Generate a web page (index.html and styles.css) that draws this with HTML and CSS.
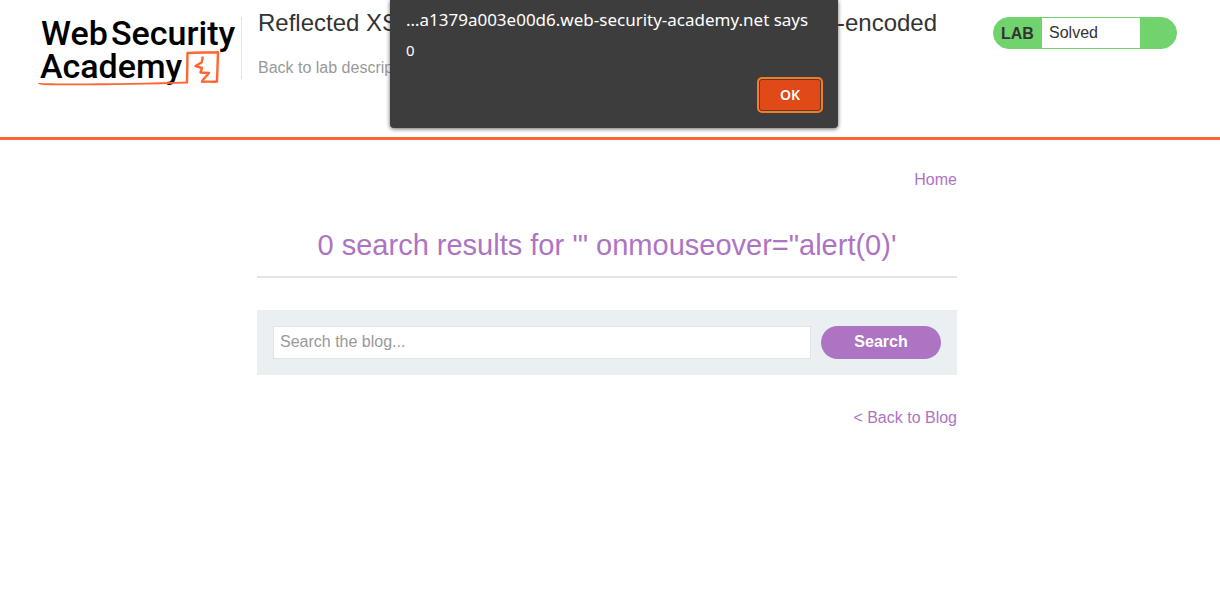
FILE: index.html
```html
<!DOCTYPE html>
<html lang="en">
<head>
<meta charset="utf-8">
<meta name="viewport" content="width=device-width, initial-scale=1">
<title>Reflected XSS into attribute with angle brackets HTML-encoded</title>
<link rel="stylesheet" href="styles.css">
</head>
<body>
<header class="lab-header">
  <div class="lab-header-inner">
    <a class="logo" href="#" aria-label="Web Security Academy">
      <svg class="logo-art" viewBox="0 0 204 76" role="img" aria-hidden="true">
        <text class="logo-text" y="35"><tspan x="3">Web</tspan><tspan x="73">Security</tspan></text>
        <text class="logo-text" x="2" y="68">Academy</text>
        <path class="logo-fill" d="M0 73C18 74 100 73.500 150 71.500L150 73.500C105 74.800 35 76 6 75C2 74.700 0 74 0 73Z"/>
        <path class="logo-line" d="M149 72.500L149.500 43C160 42.300 170 42.800 180 42.200L179 71.500C174 72 169 71.300 163 71.800"/>
        <path class="logo-line" d="M164.500 46.500C165 49 164 51 163.500 52.500L157.500 56L164 58L162.500 62.500L171 63L164 71"/>
      </svg>
    </a>
    <div class="title-container">
      <h1 class="lab-title">Reflected XSS into attribute with angle brackets HTML-encoded</h1>
      <a class="lab-link" href="#">Back to lab description</a>
    </div>
    <div class="lab-status">
      <span class="status-label">LAB</span>
      <p class="status-text">Solved</p>
      <span class="status-end"></span>
    </div>
  </div>
</header>
<main class="page">
  <nav class="page-nav"><a href="#">Home</a></nav>
  <h2 class="results-title">0 search results for '" onmouseover="alert(0)'</h2>
  <form class="search">
    <input class="search-input" type="text" placeholder="Search the blog..." aria-label="Search the blog">
    <button class="search-button" type="button">Search</button>
  </form>
  <div class="back-link"><a href="#">&lt; Back to Blog</a></div>
</main>
<div class="dialog" role="alertdialog" aria-labelledby="dialog-title" aria-describedby="dialog-message">
  <h2 class="dialog-title" id="dialog-title">…a1379a003e00d6.web-security-academy.net says</h2>
  <p class="dialog-message" id="dialog-message">0</p>
  <button class="dialog-button" type="button">OK</button>
</div>
</body>
</html>
```

FILE: styles.css
```css
* {
  box-sizing: border-box;
}

body {
  margin: 0;
  background: #fff;
  color: #333332;
  font: 16px/24px "Liberation Sans", Arial, sans-serif;
}

h1, h2, p {
  margin: 0;
  font-weight: 400;
}

a {
  color: #ad74c3;
  text-decoration: none;
}

.lab-header {
  min-height: 140px;
  padding: 10px 43px 0 38px;
  border-bottom: 3px solid #ff6633;
}

.lab-header-inner {
  display: flex;
  align-items: flex-start;
}

.logo {
  flex: none;
  width: 204px;
  height: 76px;
}

.logo-art {
  display: block;
  width: 204px;
  height: 76px;
  overflow: visible;
}

.logo-text {
  font-family: Roboto, sans-serif;
  font-size: 34px;
  font-weight: 500;
  fill: #000;
}

.logo-fill {
  fill: #ff6633;
}

.logo-line {
  fill: none;
  stroke: #ff6633;
  stroke-width: 2.4;
  stroke-linejoin: round;
}

.title-container {
  flex: 1;
  min-width: 0;
  height: 62px;
  margin: 7px 16px 0 -1px;
  padding-left: 16px;
  border-left: 1px solid #e4e4e4;
}

.lab-title {
  margin-top: -10px;
  font-size: 24px;
  line-height: 32px;
}

.lab-link {
  display: inline-block;
  margin-top: 17px;
  color: #999;
}

.lab-status {
  flex: none;
  display: flex;
  width: 184px;
  height: 32px;
  margin-top: 7px;
  border: 1px solid #70d36d;
  border-radius: 16px;
  background: #70d36d;
  overflow: hidden;
  line-height: 30px;
}

.status-label {
  width: 48px;
  padding-left: 7px;
  font-weight: 700;
  line-height: 32px;
}

.status-text {
  flex: 1;
  padding-left: 7px;
  background: #fff;
}

.status-end {
  width: 36px;
}

.page {
  width: 100%;
  max-width: 706px;
  margin: 0 auto;
  padding: 28px 6px 0 0;
}

.page-nav,
.back-link {
  text-align: right;
}

.results-title {
  margin-top: 32px;
  padding: 1px 0 11px;
  border-bottom: 2px solid #e4e4e4;
  color: #ad74c3;
  font-size: 29px;
  line-height: 40px;
  text-align: center;
}

.search {
  display: flex;
  gap: 10px;
  margin-top: 32px;
  padding: 16px;
  background: #eaeff2;
}

.search-input {
  flex: 1;
  min-width: 0;
  height: 33px;
  padding: 0 6px 2px;
  border: 1px solid #e0e3e8;
  border-radius: 0;
  background: #fff;
  color: #333332;
  font: inherit;
}

.search-input::placeholder {
  color: #999;
  opacity: 1;
}

.search-button {
  width: 120px;
  height: 33px;
  padding: 0 0 2px;
  border: 0;
  border-radius: 17px;
  background: #ad74c3;
  color: #fff;
  font: inherit;
  font-weight: 700;
}

.back-link {
  margin-top: 31px;
}

.dialog {
  position: absolute;
  top: 0;
  left: calc(50% - 220px);
  display: flex;
  flex-direction: column;
  width: 448px;
  padding: 8px 15px 15px 16px;
  border-radius: 0 0 4px 4px;
  background: #3d3d3d;
  box-shadow: 0 1px 4px rgba(0, 0, 0, 0.6);
  color: #fff;
  font-family: "Noto Sans", sans-serif;
}

.dialog-title {
  font-size: 17px;
  line-height: 24px;
  white-space: nowrap;
}

.dialog-message {
  margin-top: 6px;
  font-size: 15px;
  line-height: 24px;
}

.dialog-button {
  align-self: flex-end;
  width: 66px;
  height: 36px;
  margin-top: 15px;
  padding: 0;
  border: 2px solid #f57c1f;
  border-radius: 5px;
  background: #e04a18;
  box-shadow: inset 0 0 0 1px #5c3a2c;
  color: #fff;
  font: 600 14px/20px "Noto Sans", sans-serif;
}
```
